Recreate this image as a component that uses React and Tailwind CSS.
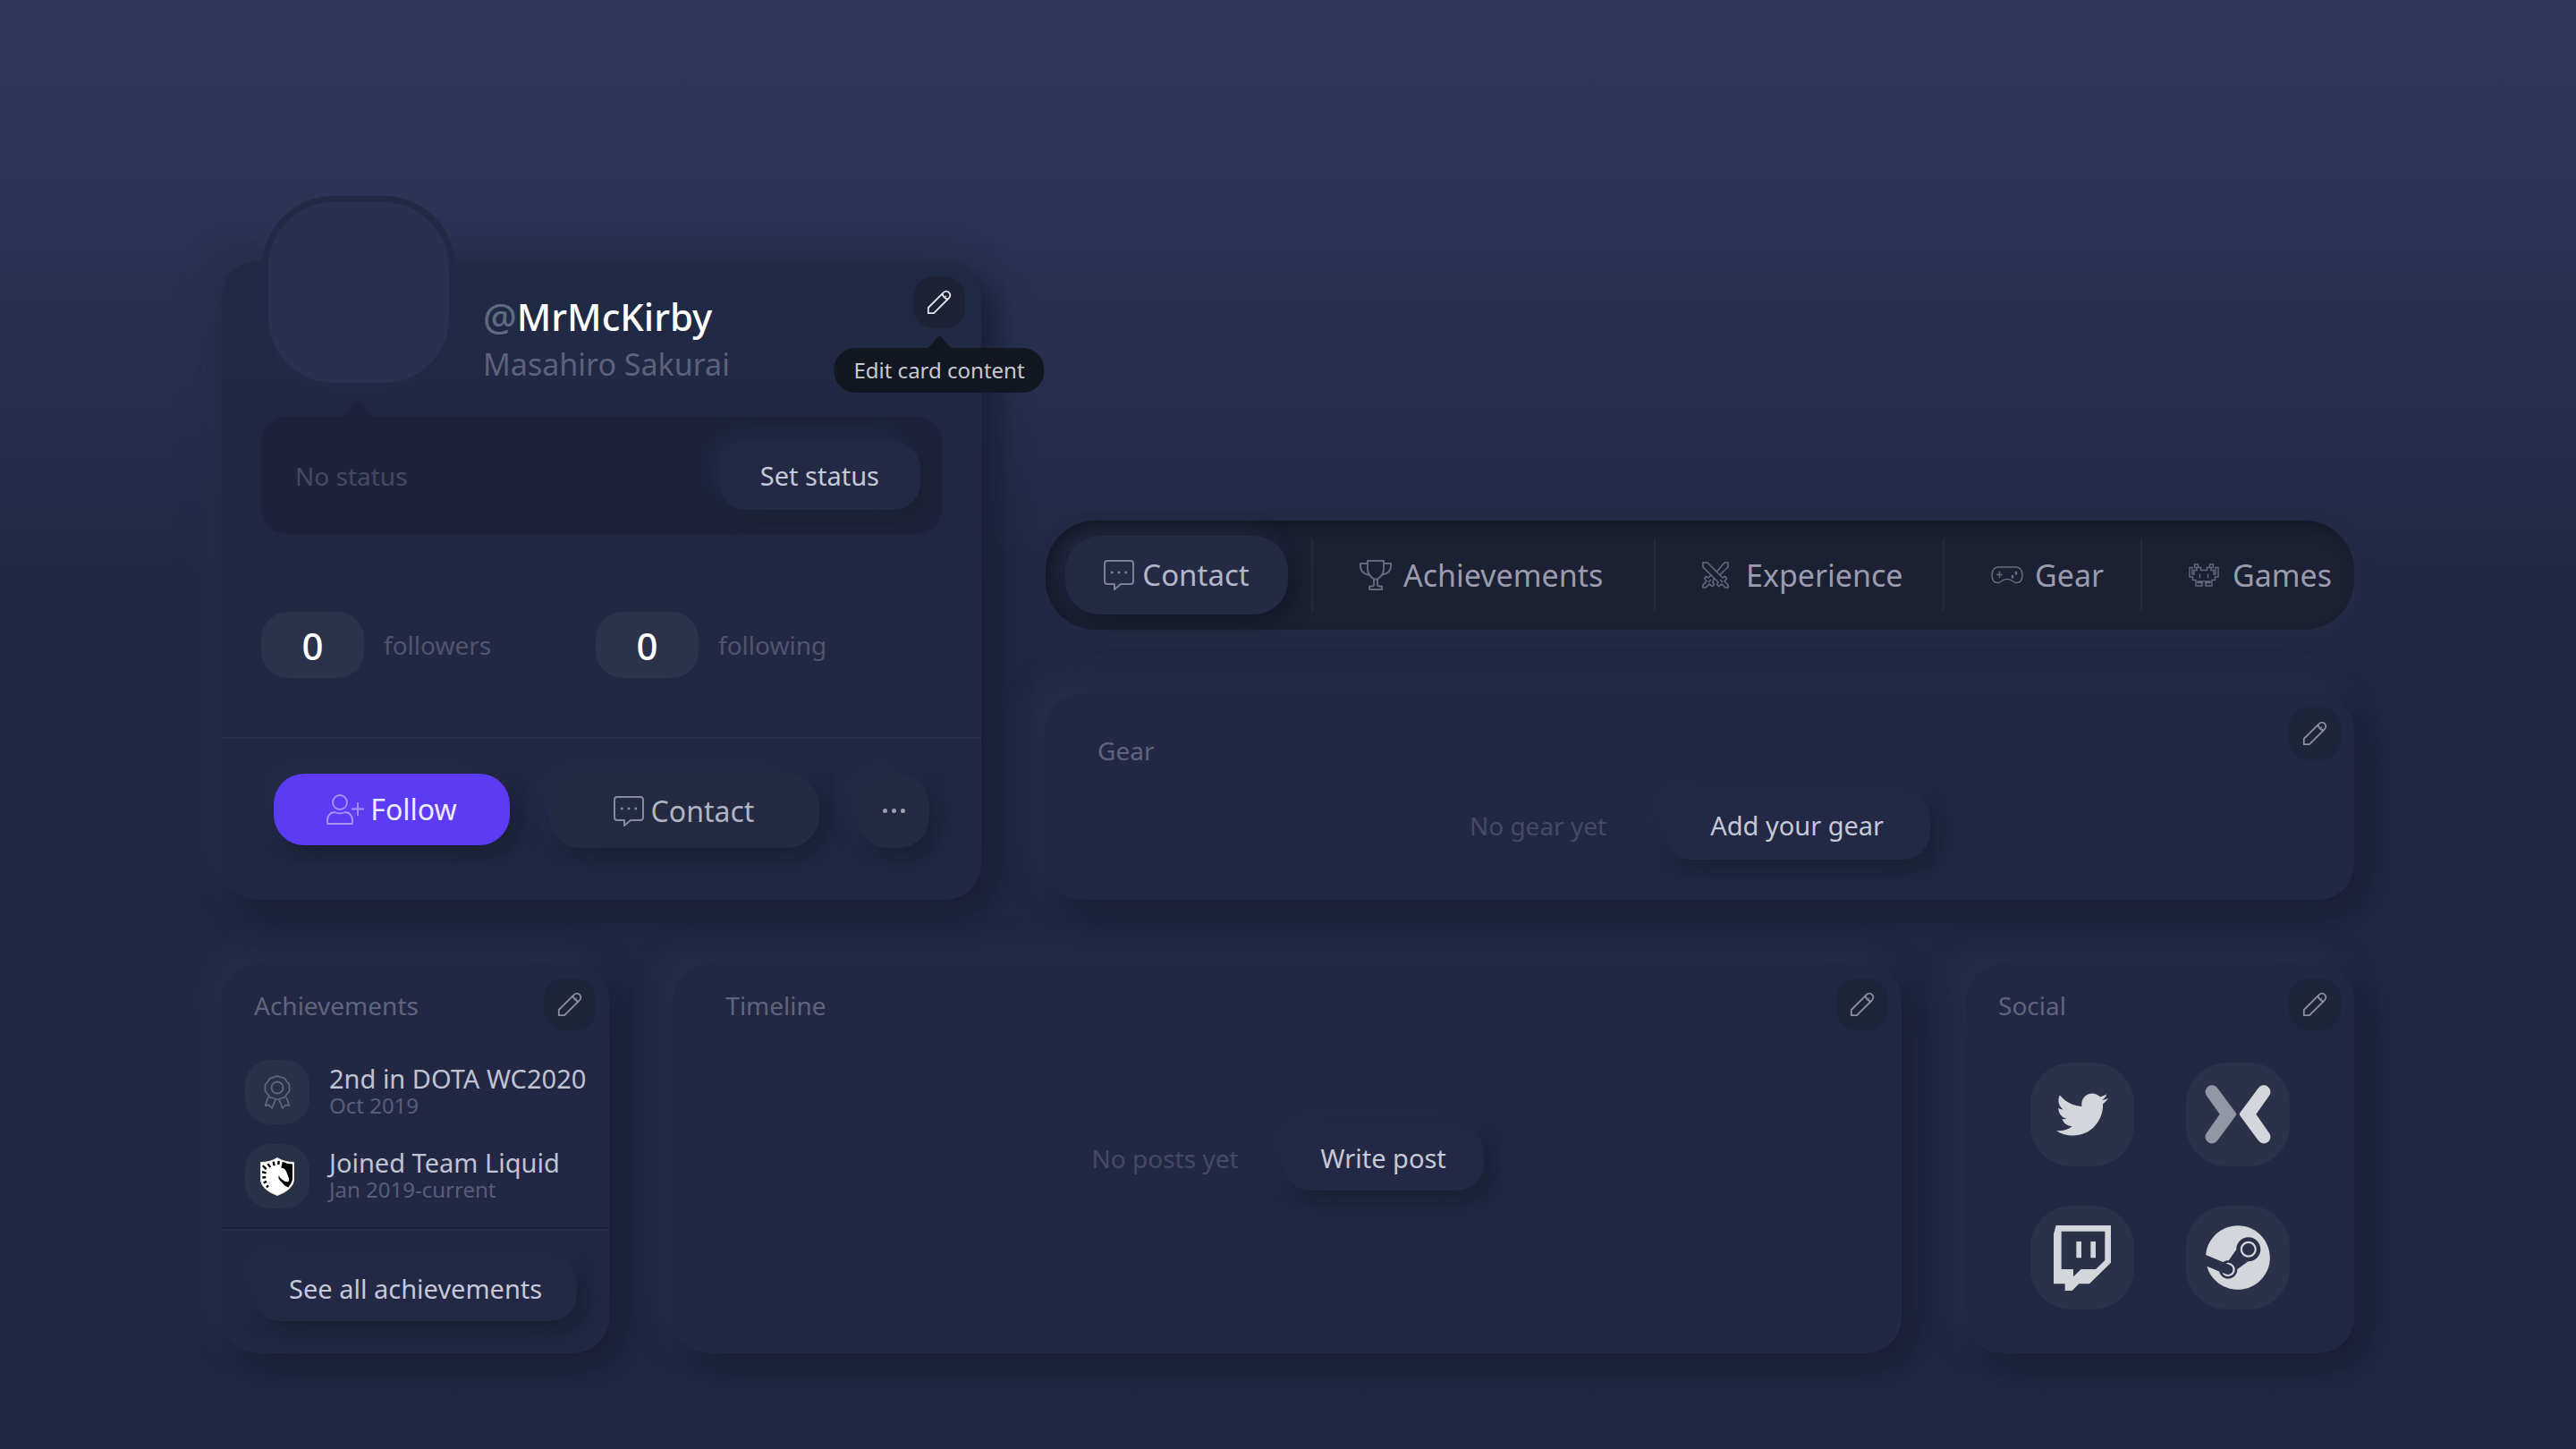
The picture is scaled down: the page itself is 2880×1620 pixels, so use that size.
import React from "react";
import { FaSteam, FaTwitter } from "react-icons/fa";

const raised =
  "bg-[#232944] shadow-[10px_12px_20px_#1a2034,-8px_-8px_22px_#252c49] text-[#c5c8d6] text-[29px] leading-9 whitespace-nowrap";
const card =
  "relative rounded-[40px] bg-[#222844] shadow-[16px_16px_36px_#191e34,-12px_-12px_32px_#27304c]";

function Pencil({ className = "" }) {
  return (
    <svg className={className} width="28" height="28" viewBox="-1 -1 28 28" fill="none" stroke="currentColor" strokeWidth="1.8" strokeLinejoin="round" aria-hidden="true">
      <path d="M0.8 25.2 V19 L17.5 2.3 Q21 -0.8 24 2 Q26.8 5 23.7 8.5 L7 25.2 Z" />
      <path d="M16.3 3.6 Q18 8 22.4 9.7" />
      <path d="M19.4 7.6 L20.8 5.6" strokeWidth="1.2" />
    </svg>
  );
}

function ChatIcon() {
  return (
    <svg className="shrink-0" width="34" height="34" viewBox="0 0 34 34" fill="none" stroke="currentColor" strokeWidth="2" strokeLinejoin="round" aria-hidden="true">
      <path d="M4 1 H30 Q33 1 33 4 V24 Q33 27 30 27 H19 L12 33 V27 H4 Q1 27 1 24 V4 Q1 1 4 1 Z" />
      <path d="M8 14 H10.4 M15.8 14 H18.2 M23.6 14 H26" strokeWidth="2.4" />
    </svg>
  );
}

function UserPlusIcon() {
  return (
    <svg className="shrink-0" width="42" height="34" viewBox="0 0 42 34" fill="none" stroke="currentColor" strokeWidth="1.8" strokeLinejoin="round" aria-hidden="true">
      <circle cx="15" cy="9" r="8" />
      <path d="M1 33 V30 Q1 21 9 20 Q15 22.6 21 20 Q29 21 29 30 V33 Z" />
      <path d="M35 9 V24 M28 16.500 H42" />
    </svg>
  );
}

function TrophyIcon() {
  return (
    <svg className="shrink-0" width="36" height="34" viewBox="0 0 36 34" fill="none" stroke="currentColor" strokeWidth="2" strokeLinejoin="round" aria-hidden="true">
      <path d="M9 1 H27 V10 Q27 17 20 21.500 H16 Q9 17 9 10 Z" />
      <path d="M9 4 H1 V7 Q1 15 11.500 17 M27 4 H35 V7 Q35 15 24.500 17" />
      <path d="M16 21.500 V28 Q16 29 14 29.500 H11 V33 H25 V29.500 H22 Q20 29 20 28 V21.500" />
    </svg>
  );
}

function SwordsIcon() {
  return (
    <svg className="shrink-0" width="30" height="30" viewBox="0 0 30 30" fill="none" stroke="currentColor" strokeWidth="1.6" strokeLinejoin="round" aria-hidden="true">
      <path d="M1 1 H6 L23 18 L25.500 16.500 L27.500 18.500 L25 22 L29 26 L29 29 H26 L22 25 L18.500 27.500 L16.500 25.500 L18 23 L1 6 Z" />
      <path d="M16.500 11 L25 1 H29 V6 L20 14.500 M13 18.500 L12 23 L13.500 25.500 L11.500 27.500 L8 25 L4 29 H1 V26 L5 22 L2.500 18.500 L4.500 16.500 L7 18 L10.500 14.500" />
      <path d="M20 20 L23 23 M10 20 L7 23" />
    </svg>
  );
}

function GamepadIcon() {
  return (
    <svg className="shrink-0" width="36" height="20" viewBox="0 0 36 20" fill="none" stroke="currentColor" strokeWidth="1.5" strokeLinejoin="round" aria-hidden="true">
      <path d="M9 1 H27 Q35 1 35 10 Q35 18.500 28.500 18.500 Q26 18.500 24.500 17 Q22 14.500 18 14.500 Q14 14.500 11.500 17 Q10 18.500 7.500 18.500 Q1 18.500 1 10 Q1 1 9 1 Z" />
      <path d="M9.500 6 V13 M6 9.500 H13" />
      <path d="M28 7 V8.500 M24 11 V12.500" strokeWidth="2.600" strokeLinecap="round" />
    </svg>
  );
}

function AlienIcon() {
  return (
    <svg className="shrink-0" width="34" height="26" viewBox="0 0 34 26" fill="none" stroke="currentColor" strokeWidth="1.4" aria-hidden="true">
      <path d="M6.500 1 H10.500 V4.500 H13.500 V7.500 H20.500 V4.500 H23.500 V1 H27.500 V4.500 H25 V7.500 H28 V12 H30 V4.500 H33 V15 H29.500 V18.500 H26 V25 H19 V21.500 H24 V20 H10 V21.500 H15 V25 H8 V18.500 H4.500 V15 H1 V4.500 H4 V12 H6 V7.500 H9 V4.500 H6.500 Z" />
      <path d="M12.500 11.500 V16.500 M21.500 11.500 V16.500" />
    </svg>
  );
}

function MedalIcon() {
  return (
    <svg width="30" height="38" viewBox="0 0 30 38" fill="none" stroke="currentColor" strokeWidth="1.8" strokeLinejoin="round" aria-hidden="true">
      <path d="M15 1 L19 2.400 L23 3.500 L25.500 7 L28.500 10.500 V18 L25.500 21.500 L23 25 L19 26 L15 27.500 L11 26 L7 25 L4.500 21.500 L1.500 18 V10.500 L4.500 7 L7 3.500 L11 2.400 Z" />
      <circle cx="15" cy="14" r="6.500" />
      <path d="M5 24.500 L1.500 34 L6 33.500 L9 37 L13 27.500 M25 24.500 L28.500 34 L24 33.500 L21 37 L17 27.500" />
    </svg>
  );
}

function LiquidLogo() {
  return (
    <svg width="38" height="43" viewBox="90 366 114 128" aria-hidden="true">
      <path d="M147 367 Q170 382 203 382 V440 Q200 474 147 493 Q94 474 91 440 V382 Q124 382 147 367 Z" fill="#ffffff" stroke="#e9e6cf" strokeWidth="3" />
      <path d="M164 380 Q180 388 198 388 V440 Q195 454 184 466 L172 460 L152 438 L151 426 Q160 440 172 446 L184 448 L187 438 L177 412 L171 404 L160 400 Z" fill="#000000" />
      <path d="M98 393 L110 405 M115 387 L124 399 M134 380 L137 393 M152 377 L151 390 M96 414 L110 418 M97 433 L109 432 M101 451 L111 446 M111 466 L117 459" stroke="#000000" strokeWidth="7" fill="none" />
    </svg>
  );
}

function MixerLogo() {
  return (
    <svg width="74" height="66" viewBox="915 454 220 198" fill="currentColor" aria-hidden="true">
      <path opacity="0.62" d="M956 464 A22 22 0 0 0 920 490 L964 552 L920 615 A22 22 0 0 0 956 641 L1018 557 Q1021 552 1018 547 Z" />
      <path d="M1094 464 A22 22 0 0 1 1130 490 L1086 552 L1130 615 A22 22 0 0 1 1094 641 L1032 557 Q1029 552 1032 547 Z" />
    </svg>
  );
}

function TwitchLogo() {
  return (
    <svg width="64" height="73" viewBox="408 921 192 219" fill="currentColor" fillRule="evenodd" aria-hidden="true">
      <path d="M416 921 H600 V1046 L528 1117 H493 L470 1140 H446 V1117 H408 V950 Z M434 941 V1068 H474 V1093 L500 1068 H549 L580 1038 V941 Z" />
      <path d="M484 975 H501 V1030 H484 Z M532 975 H549 V1030 H532 Z" />
    </svg>
  );
}

function EditButton({ label, active }) {
  return (
    <button
      type="button"
      aria-label={label}
      className={`flex size-[58px] items-center justify-center rounded-[22px] ${active ? "bg-[#1d2236] text-[#e3e4ea]" : "bg-[#1e243a] text-[#8b8fa3]"}`}
    >
      <Pencil />
    </button>
  );
}

function Panel({ title, className = "", children }) {
  return (
    <section className={`${card} flex flex-col ${className}`}>
      <header className="flex items-start justify-between pt-[16px] pr-[15px]">
        <h2 className="pt-3 text-[28px] leading-9 text-[#5f647d]">{title}</h2>
        <EditButton label={`Edit ${title}`} />
      </header>
      {children}
    </section>
  );
}

function Stat({ value, label }) {
  return (
    <div className="flex items-center gap-[22px]">
      <span className="flex h-[74px] w-[115px] items-center justify-center rounded-[30px] bg-[#2b324a] text-[42px] font-medium text-white">
        {value}
      </span>
      <span className="text-[28px] text-[#50556e]">{label}</span>
    </div>
  );
}

function ProfileCard() {
  return (
    <section className={`${card} flex flex-col bg-linear-to-b from-[#202a44] to-[#222844] to-25%`}>
      <div className="flex h-[174px] pl-[45px] pr-[18px]">
        <div className="-mt-[73px] size-[216px] shrink-0 rounded-[80px] border-[7px] border-[#202a45] bg-[#2a3150]" />
        <div className="flex-1 pt-[34px] pl-[31px]">
          <h1 className="text-[42px] leading-[56px] font-medium text-white">
            <span className="text-[#5f6a80]">@</span>MrMcKirby
          </h1>
          <p className="text-[34px] leading-[50px] text-[#5d617b]">Masahiro Sakurai</p>
        </div>
        <div className="relative z-10 mt-[17px] h-[58px]">
          <EditButton label="Edit card content" active />
          <div role="tooltip" className="absolute top-[80px] left-1/2 -translate-x-1/2 rounded-[24px] bg-[#131722] px-[22px] text-[24px] leading-[50px] whitespace-nowrap text-[#c8c9d0]">
            <svg className="absolute -top-[14px] left-1/2 -translate-x-1/2" width="32" height="15" viewBox="0 0 32 15" fill="#131722" aria-hidden="true">
              <path d="M0 15 Q5 14 12 4 Q16 -2 20 4 Q27 14 32 15 Z" />
            </svg>
            Edit card content
          </div>
        </div>
      </div>

      <div className="relative mx-[44px] flex h-[131px] items-center justify-between rounded-[28px] bg-[#1e233b] pr-[24px] pl-[38px]">
        <svg className="absolute -top-[19px] left-[88px]" width="40" height="20" viewBox="0 0 40 20" fill="#1e233b" aria-hidden="true">
          <path d="M0 20 Q6 19 15 5 Q20 -3 25 5 Q34 19 40 20 Z" />
        </svg>
        <span className="text-[28px] text-[#454a63]">No status</span>
        <button type="button" className={`${raised} h-[76px] rounded-[30px] px-[46px]`}>Set status</button>
      </div>

      <div className="grid grid-cols-[374fr_387fr] px-[44px] pt-[87px] pb-[66px]">
        <Stat value="0" label="followers" />
        <Stat value="0" label="following" />
      </div>

      <div className="flex flex-1 items-start gap-[43px] border-t-2 border-[#292f49] px-[58px] pt-[39px] pb-[58px]">
        <button type="button" className="flex h-[80px] flex-[264] items-center justify-center gap-[7px] rounded-[34px] bg-[#5d3bf4] text-[32px] text-[#eeeaff] shadow-[10px_12px_20px_#1a2034,-8px_-8px_22px_#252c49]">
          <span className="text-[#a994fa]"><UserPlusIcon /></span>
          Follow
        </button>
        <button type="button" className="flex h-[83px] flex-[303] items-center justify-center gap-[8px] rounded-[36px] bg-[#232a42] text-[32px] text-[#b1b4c2] shadow-[10px_12px_20px_#1a2034,-8px_-8px_22px_#252c49]">
          <span className="text-[#858a9d]"><ChatIcon /></span>
          Contact
        </button>
        <button type="button" aria-label="More" className="flex h-[83px] flex-[80] items-center justify-center gap-[5px] rounded-[34px] bg-[#232a42] shadow-[10px_12px_20px_#1a2034,-8px_-8px_22px_#252c49]">
          <span className="size-[5px] rounded-full bg-[#9ea1b1]" />
          <span className="size-[5px] rounded-full bg-[#9ea1b1]" />
          <span className="size-[5px] rounded-full bg-[#9ea1b1]" />
        </button>
      </div>
    </section>
  );
}

const tabs = [
  { label: "Achievements", icon: <TrophyIcon /> },
  { label: "Experience", icon: <SwordsIcon /> },
  { label: "Gear", icon: <GamepadIcon /> },
  { label: "Games", icon: <AlienIcon /> },
];

function TabBar() {
  return (
    <nav className="grid h-[122px] grid-cols-[297fr_383fr_323fr_221fr_239fr] items-center rounded-[56px] bg-[#1c2033] shadow-[inset_6px_8px_14px_#151a29,4px_8px_16px_#252c46]">
      <button type="button" className="mr-[26px] ml-[22px] flex h-[88px] items-center justify-center gap-[9px] rounded-[38px] bg-[#242a44] text-[33px] text-[#b4b7c8] shadow-[10px_10px_18px_#151a2b,-6px_-6px_18px_#20263d]">
        <span className="text-[#7d8195]"><ChatIcon /></span>
        Contact
      </button>
      {tabs.map((t) => (
        <button key={t.label} type="button" className="flex h-[80px] items-center border-l-2 border-[#23283b] pl-[52px] text-[34px] whitespace-nowrap text-[#9a9cae]">
          <span className="flex w-[49px] text-[#66697e]">{t.icon}</span>
          {t.label}
        </button>
      ))}
    </nav>
  );
}

function Achievement({ icon, title, date }) {
  return (
    <li className="flex items-center gap-[22px]">
      <span className="flex size-[72px] shrink-0 items-center justify-center rounded-[28px] bg-[#293149] text-[#5f657e]">{icon}</span>
      <div className="whitespace-nowrap">
        <p className="text-[29px] leading-[30px] text-[#c0c3d2]">{title}</p>
        <p className="text-[24px] leading-[30px] text-[#585d77]">{date}</p>
      </div>
    </li>
  );
}

const socials = [
  { label: "Twitter", icon: <FaTwitter size={58} /> },
  { label: "Mixer", icon: <MixerLogo /> },
  { label: "Twitch", icon: <TwitchLogo /> },
  { label: "Steam", icon: <FaSteam size={74} /> },
];

export default function App() {
  return (
    <main className="flex min-h-screen flex-col gap-[72px] bg-[#222844] bg-linear-to-b from-[#2e3859] via-[#2b3455] via-15% to-[#222844] to-40% px-[248px] pt-[292px] pb-[106px] font-['Noto_Sans',sans-serif]">
      <div className="grid grid-cols-[849fr_1463fr] gap-[72px]">
        <ProfileCard />
        <div className="flex flex-col justify-end gap-[72px]">
          <TabBar />
          <Panel title="Gear" className="min-h-[230px] pl-[58px] [&>header]:pt-[15px] [&_h2]:pt-[30px]">
            <div className="mt-[28px] mr-[58px] flex items-center justify-center gap-[64px]">
              <span className="text-[28px] text-[#454a63]">No gear yet</span>
              <button type="button" className={`${raised} h-[76px] rounded-[30px] px-[52px]`}>Add your gear</button>
            </div>
          </Panel>
        </div>
      </div>

      <div className="grid grid-cols-[433fr_1373fr_434fr] gap-[72px]">
        <Panel title="Achievements" className="[&_h2]:pl-[36px]">
          <ul className="flex flex-col gap-[22px] px-[26px] pt-[33px] pb-[23px]">
            <Achievement icon={<MedalIcon />} title="2nd in DOTA WC2020" date="Oct 2019" />
            <Achievement icon={<LiquidLogo />} title="Joined Team Liquid" date="Jan 2019-current" />
          </ul>
          <div className="flex justify-center border-t-2 border-[#292f49] px-[36px] pt-[29px] pb-[36px] shadow-[0_-2px_0_#1c213a]">
            <button type="button" className={`${raised} h-[72px] w-full rounded-[30px]`}>See all achievements</button>
          </div>
        </Panel>

        <Panel title="Timeline" className="[&_h2]:pl-[58px]">
          <div className="flex flex-1 items-center justify-center gap-[50px] pb-[76px]">
            <span className="text-[28px] text-[#454a63]">No posts yet</span>
            <button type="button" className={`${raised} h-[72px] rounded-[30px] px-[42px]`}>Write post</button>
          </div>
        </Panel>

        <Panel title="Social" className="[&_h2]:pl-[36px]">
          <ul className="grid grid-cols-2 gap-x-[58px] gap-y-[44px] self-center pt-[36px] pb-[49px]">
            {socials.map((s) => (
              <li key={s.label}>
                <a href="#" aria-label={s.label} className="flex size-[116px] items-center justify-center rounded-[46px] bg-[#2b3149] text-[#d3d6db]">
                  {s.icon}
                </a>
              </li>
            ))}
          </ul>
        </Panel>
      </div>
    </main>
  );
}
